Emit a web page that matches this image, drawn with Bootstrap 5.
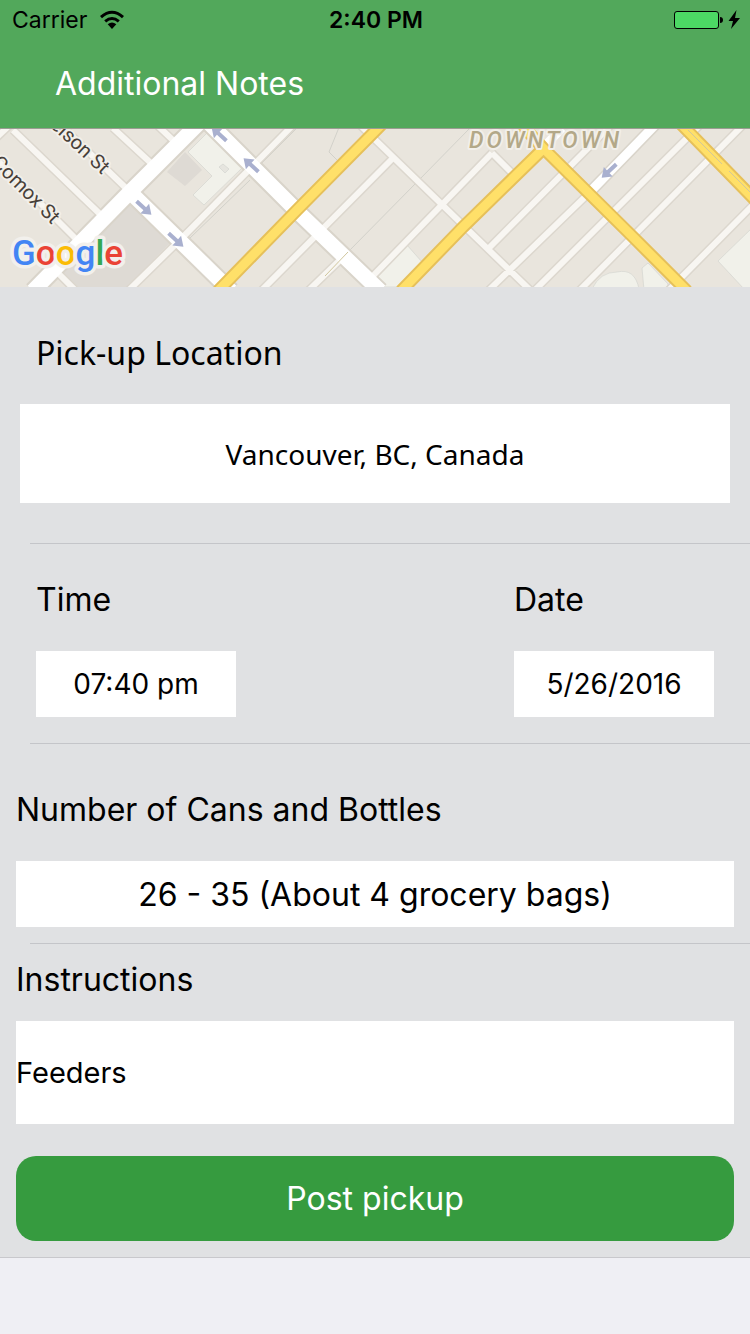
<!DOCTYPE html>
<html lang="en">
<head>
<meta charset="utf-8">
<meta name="viewport" content="width=device-width, initial-scale=1">
<title>Additional Notes</title>
<link href="https://cdn.jsdelivr.net/npm/bootstrap@5.3.0/dist/css/bootstrap.min.css" rel="stylesheet">
<style>
  body { background: #efeff4; color: #000; font-family: Inter, "Liberation Sans", sans-serif; }
  .app-header { background: #52a85b; border-bottom: 1px solid #9b9d93; }
  .status-row { height: 40px; padding: 0 10px 0 12px; font-size: 23px; line-height: 40px; color: #000; }
  .status-side { flex: 1 1 0; }
  .status-time { font-weight: 600; }
  .page-title { height: 88px; padding-left: 55px; font-size: 32px; line-height: 88px; font-weight: 400; color: #fff; }
  .map-view { display: block; width: 100%; height: 158px; background: #e9e5dd; }
  .form-area { background: #e0e1e3; border-bottom: 1px solid #c8c8cc; }
  .divider { height: 1px; margin: 0 0 0 30px; border: 0; background: #c4c5c9; opacity: 1; }
  .field-label { display: block; margin: 0 0 31px; font-size: 32px; line-height: 40px; }
  .field-box { height: 66px; padding: 0; border: 0; border-radius: 0; background: #fff; color: #000; text-align: center; font-size: 32px; }
  .place { padding: 46px 20px 40px; font-family: "Noto Sans", sans-serif; }
  .place .field-label { padding-left: 16px; }
  .place .field-box { height: 99px; font-size: 28px; }
  .schedule { padding: 36px 36px 26px; }
  .schedule .field-box { width: 200px; font-size: 28px; }
  .amount { padding: 46px 16px 16px; }
  .notes { padding: 16px; }
  .notes .field-label { margin-bottom: 21px; }
  .notes .field-box { height: 103px; text-align: left; font-size: 29px; }
  .btn-post { height: 85px; margin-top: 32px; padding: 0; border: 0; border-radius: 20px; font-size: 32px; color: #fff; --bs-btn-hover-color: #fff; background: #369b3f; --bs-btn-hover-bg: #2f8a37; }
</style>
</head>
<body>
<header class="app-header">
  <div class="status-row d-flex align-items-center">
    <div class="status-side d-flex align-items-center">
      <span>Carrier</span>
      <svg class="ms-2" width="34" height="20" viewBox="-3 0 34 20" role="img" aria-label="Wi-Fi">
        <g fill="none" stroke="#000" stroke-width="3"><path d="M3 7.200Q14 -2.600 25 7.200"/><path d="M7.200 11.400Q14 5.600 20.800 11.400"/></g>
        <path d="M9.700 14.200Q14 10.800 18.300 14.200L14 19Z"/>
      </svg>
    </div>
    <span class="status-time">2:40 PM</span>
    <div class="status-side d-flex align-items-center justify-content-end">
      <svg width="68" height="22" viewBox="0 0 68 22" role="img" aria-label="Battery charging">
        <rect x="2.500" y="2.500" width="44" height="17" rx="2.500" fill="#4cd964" stroke="#000"/>
        <path d="M48 8q3 0 3 3t-3 3z"/><path d="M64.500 1 56.500 12h4.500L59 20 68 9h-5z"/>
      </svg>
    </div>
  </div>
  <h1 class="page-title m-0">Additional Notes</h1>
</header>
<main>
  <svg class="map-view" viewBox="0 129 750 158" preserveAspectRatio="xMidYMid slice" role="img" aria-label="Map of downtown Vancouver">
    <defs>
      <path id="arrow" d="M-10-2H1V-6.500L10 0 1 6.500V2H-10Z" fill="#a9b0cf"/>
      <g id="minor">
        <path d="M-4 138 15 120M13 130 103 217M113 128 153 165M157 125 178 145M-10 153 78 241M45 110 130 192M55 270 76 291M128 291 180 240 293 125M360 125 530 290M393 158 262 290M340 260 308 291M492 153 369 280M492 153 513 174M487 250 611 125M488 291 587 195M534 291 700 125M579 291 743 125M668 291 755 203"/>
      </g>
      <g id="major"><path d="M33 291 130 192 200 122"/><path d="M208 122 298 212 380 291M130 192 231 291"/></g>
      <g id="yellow"><path d="M218 291 297 210 382 124M401 291 463 227 543 149"/><path d="M521 124 543 148 633 237 687 291M681 124 755 200"/></g>
    </defs>
    <path fill="#dedad4" d="M130 203 170 243 127 287H73L62 272ZM185 152 202 170 185 186 167 172Z"/>
    <g fill="#f1f1ea" stroke="#d0d2cc" stroke-width=".6">
      <path d="M207 133 188 152 212 176 193 195 204 205 242 168ZM407 245 422 262 397 287H377L372 278ZM718 261 752 228V290H745ZM592 289Q600 272 617 272 635 268 639 289ZM642 268 648 263 668 284 666 290H644Z"/>
      <path fill="#e6e5df" d="M223 164 229 169 225 173 219 167Z"/>
    </g>
    <path fill="none" stroke="#d2d1ca" d="M340 125 329 152 339 162M262 163 296 129M190 238 250 180M470 128 417 182 348 252 308 292"/>
    <g fill="none">
      <use href="#minor" stroke="#dcd7ce" stroke-width="9"/>
      <use href="#major" stroke="#d9d4ca" stroke-width="19"/>
      <path d="M587 195 655 125" stroke="#d9d4ca" stroke-width="12"/>
      <use href="#minor" stroke="#f8f6f2" stroke-width="6"/>
      <use href="#major" stroke="#fff" stroke-width="15"/>
      <path d="M587 195 655 125M543 148 562 128" stroke="#fff" stroke-width="9"/>
      <use href="#yellow" stroke="#e6c05a" stroke-width="13"/>
      <use href="#yellow" stroke="#ffe069" stroke-width="9"/>
      <path d="M348 252 325 276M688 130 722 164M729 171 752 194" stroke="#d0c69d"/>
    </g>
    <use href="#arrow" transform="translate(144 208) rotate(42)"/>
    <use href="#arrow" transform="translate(176 240) rotate(42)"/>
    <use href="#arrow" transform="translate(219 134) rotate(222)"/>
    <use href="#arrow" transform="translate(251 165) rotate(222)"/>
    <use href="#arrow" transform="translate(609 171) rotate(137)"/>
    <g font-family="Roboto, sans-serif" fill="#474039" stroke="#f2efe9" stroke-width="4" stroke-linejoin="round" paint-order="stroke" font-size="20">
      <text transform="translate(102 175) rotate(43)" text-anchor="end">Nelson St</text>
      <text transform="translate(52 225) rotate(45)" text-anchor="end">Comox St</text>
      <text x="469" y="148" font-size="23" font-style="italic" font-weight="500" letter-spacing="3" fill="#b3a888">DOWNTOWN</text>
    </g>
    <text x="12" y="265" font-family="Roboto, sans-serif" font-size="35" font-weight="500" stroke="#f2f0ec" stroke-width="7" stroke-linejoin="round" paint-order="stroke"><tspan fill="#4285f4">G</tspan><tspan fill="#ea4335">o</tspan><tspan fill="#fbbc05">o</tspan><tspan fill="#4285f4">g</tspan><tspan fill="#34a853">l</tspan><tspan fill="#ea4335">e</tspan></text>
  </svg>
  <form class="form-area">
    <section class="place">
      <label class="field-label" for="location">Pick-up Location</label>
      <input class="form-control field-box" id="location" type="text" value="Vancouver, BC, Canada">
    </section>
    <hr class="divider">
    <section class="schedule d-flex justify-content-between">
      <div>
        <label class="field-label" for="time">Time</label>
        <input class="form-control field-box" id="time" type="text" value="07:40 pm">
      </div>
      <div>
        <label class="field-label" for="date">Date</label>
        <input class="form-control field-box" id="date" type="text" value="5/26/2016">
      </div>
    </section>
    <hr class="divider">
    <section class="amount">
      <label class="field-label" for="amount">Number of Cans and Bottles</label>
      <input class="form-control field-box" id="amount" type="text" value="26 - 35 (About 4 grocery bags)">
    </section>
    <hr class="divider">
    <section class="notes">
      <label class="field-label" for="instructions">Instructions</label>
      <input class="form-control field-box" id="instructions" type="text" value="Feeders">
      <button class="btn btn-post d-block w-100" type="button">Post pickup</button>
    </section>
  </form>
</main>
<script src="https://cdn.jsdelivr.net/npm/bootstrap@5.3.0/dist/js/bootstrap.bundle.min.js"></script>
</body>
</html>
